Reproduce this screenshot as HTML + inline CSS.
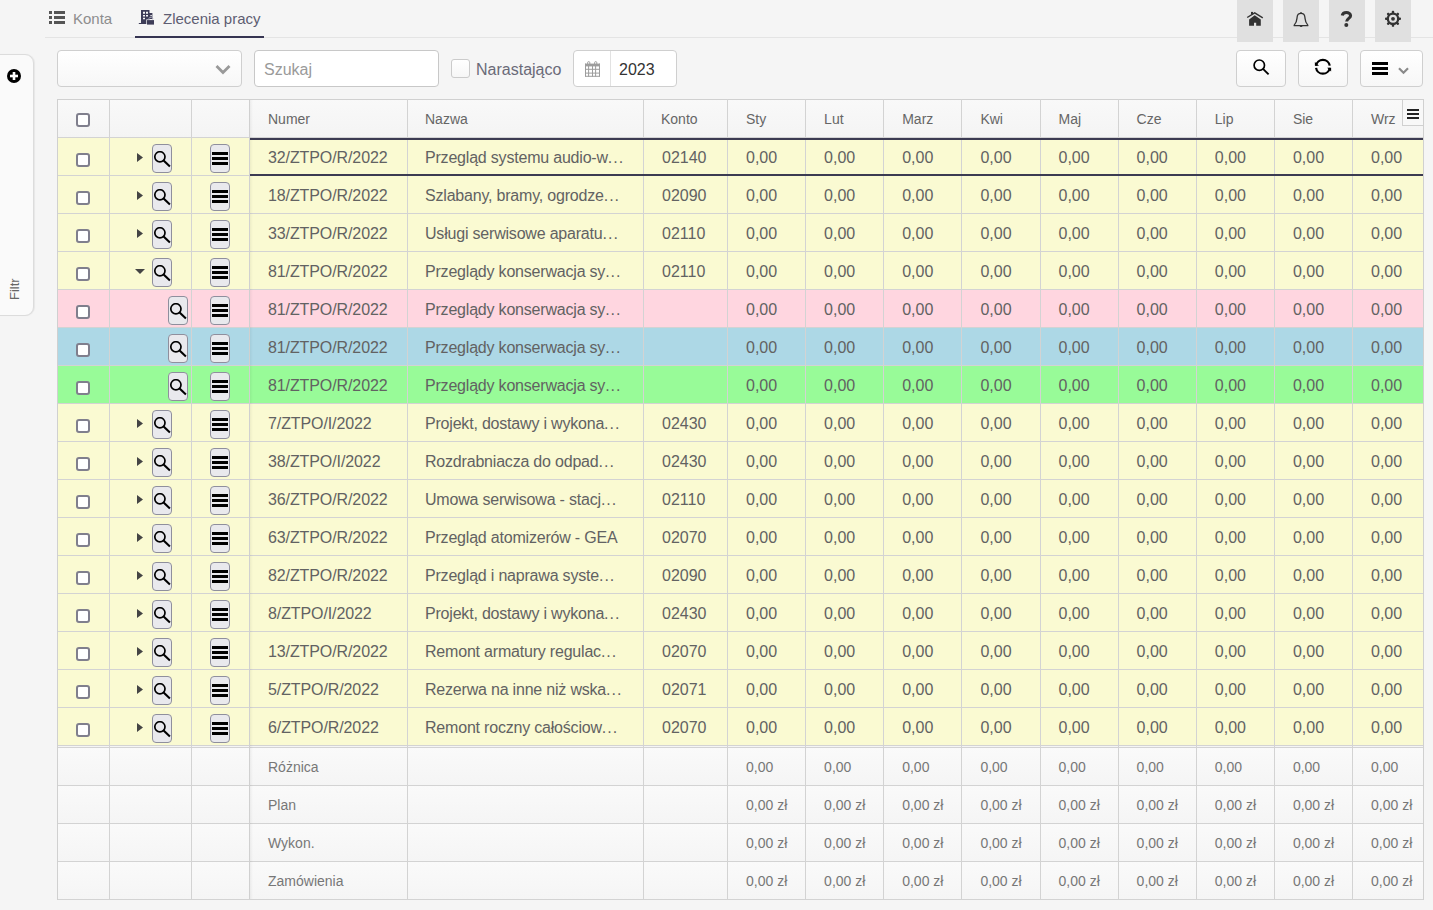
<!DOCTYPE html><html><head><meta charset="utf-8"><style>
*{box-sizing:border-box}
html,body{margin:0;padding:0}
body{width:1433px;height:910px;overflow:hidden;background:#f5f5f5;position:relative;font-family:"Liberation Sans",sans-serif;color:#5c5c5c}
.ab{position:absolute}
.t{position:absolute;white-space:nowrap}
.vl{position:absolute;width:1px;background:#d3d3d3}
.hl{position:absolute;height:1px;background:#d3d3d3}
.cb{position:absolute;width:14px;height:14px;border:2px solid #807f8d;border-radius:3px;background:#fff}
.sb{position:absolute;width:20px;height:29px;border:1px solid #8f8f9d;border-radius:4px;background:#e9e9ed}
.sb svg{position:absolute;left:0px;top:6px}
.mb{position:absolute;width:20px;height:29px;border:1px solid #8f8f9d;border-radius:4px;background:#e9e9ed}
.mb svg{position:absolute;left:1px;top:7px}
.cell{position:absolute;font-size:16px;line-height:18px;white-space:nowrap;color:#626262}
.hc{position:absolute;font-size:14px;line-height:16px;white-space:nowrap;color:#666}
.fc{position:absolute;font-size:14px;line-height:16px;white-space:nowrap;color:#777}
.btn{position:absolute;border:1px solid #cfcfcf;border-radius:4px;background:linear-gradient(#fff,#f7f7f7)}
.tb{position:absolute;top:0;width:36px;height:42px;background:#e0e0e0}
.tb svg{position:absolute}
</style></head><body>

<div class="hl" style="left:45px;top:37px;width:1388px;background:#e4e4e4"></div>
<svg class="ab" style="left:49px;top:11px" width="16" height="13" viewBox="0 0 16 13" fill="#555"><rect x="0" y="0" width="3" height="3"/><rect x="5" y="0" width="11" height="3"/><rect x="0" y="5" width="3" height="3"/><rect x="5" y="5" width="11" height="3"/><rect x="0" y="10" width="3" height="3"/><rect x="5" y="10" width="11" height="3"/></svg>
<div class="t" style="left:73px;top:10px;font-size:15px;line-height:17px;color:#8d8d8d">Konta</div>
<svg class="ab" style="left:138px;top:9px" width="17" height="16" viewBox="0 0 17 16" fill="#3e3d58"><path fill-rule="evenodd" d="M3 1h8.5v14H3z M5 2.8h2v1.9H5z M8 2.8h2v1.9H8z M5 5.9h2v1.7H5z M8 5.9h2v1.7H8z M5 8.8h2v1.4H5z"/><rect x="0.8" y="14" width="3" height="1"/><path fill-rule="evenodd" d="M11 4.1h3.4v6H11z M12.4 5.9h1.4v1.3h-1.4z"/><rect x="9" y="11.1" width="7" height="4.5" stroke="#f5f5f5" stroke-width="1.4" paint-order="stroke"/><path d="M10.9 10.4v-0.9a1 1 0 0 1 1-1h1.8a1 1 0 0 1 1 1v0.9" fill="none" stroke="#9b9aad" stroke-width="1"/></svg>
<div class="t" style="left:163px;top:10px;font-size:15px;line-height:17px;color:#5e5d72">Zlecenia pracy</div>
<div class="ab" style="left:135px;top:36px;width:129px;height:2px;background:#363552"></div>
<div class="tb" style="left:1237px"></div>
<div class="tb" style="left:1283px"></div>
<div class="tb" style="left:1329px"></div>
<div class="tb" style="left:1375px"></div>
<svg class="ab" style="left:1246px;top:11px" width="18" height="16" viewBox="0 0 18 16"><polyline points="1.2,6.5 8.7,1.9 16.8,6.8" fill="none" stroke="#333" stroke-width="1.4"/><rect x="5" y="0.9" width="2" height="2.4" fill="#333"/><path d="M3.1 8.5L8.7 4.3L14.8 8.5V14.8H10.2V11.7H8V14.8H3.1Z" fill="#333"/></svg>
<svg class="ab" style="left:1293px;top:12px" width="16" height="16" viewBox="0 0 16 16"><path d="M8 1.3c-2.3 0-3.7 1.6-3.9 3.9c-0.3 3.2 -0.2 5.2 -2.9 7.9v0.6h13.6v-0.6c-2.7-2.7-2.6-4.7-2.9-7.9C11.7 2.9 10.3 1.3 8 1.3z" fill="none" stroke="#333" stroke-width="1.3" stroke-linejoin="round"/><path d="M6.6 13.6a1.5 1.5 0 0 0 3 0z" fill="#333"/><circle cx="8" cy="0.9" r="0.8" fill="#333"/></svg>
<svg class="ab" style="left:1340px;top:10px" width="13" height="18" viewBox="0 0 13 18"><path d="M2.2 5.6C2.6 3.4 4.2 2.5 6.4 2.5C8.8 2.5 10.6 3.8 10.6 5.7C10.6 8.2 6.6 8.6 6.6 11.6" fill="none" stroke="#333" stroke-width="3"/><circle cx="6.3" cy="15.1" r="2" fill="#333"/></svg>
<svg class="ab" style="left:1384px;top:10px" width="18" height="18" viewBox="0 0 18 18"><g transform="translate(9 8.8)" fill="#333"><rect x="-1.2" y="-8" width="2.4" height="3.2" rx="0.9" transform="rotate(0)"/><rect x="-1.2" y="-8" width="2.4" height="3.2" rx="0.9" transform="rotate(45)"/><rect x="-1.2" y="-8" width="2.4" height="3.2" rx="0.9" transform="rotate(90)"/><rect x="-1.2" y="-8" width="2.4" height="3.2" rx="0.9" transform="rotate(135)"/><rect x="-1.2" y="-8" width="2.4" height="3.2" rx="0.9" transform="rotate(180)"/><rect x="-1.2" y="-8" width="2.4" height="3.2" rx="0.9" transform="rotate(225)"/><rect x="-1.2" y="-8" width="2.4" height="3.2" rx="0.9" transform="rotate(270)"/><rect x="-1.2" y="-8" width="2.4" height="3.2" rx="0.9" transform="rotate(315)"/><circle r="5.2" fill="none" stroke="#333" stroke-width="2.3"/><circle r="1.9"/></g></svg>
<div class="btn" style="left:57px;top:50px;width:185px;height:37px"></div>
<svg class="ab" style="left:215px;top:64px" width="16" height="11" viewBox="0 0 16 11"><path d="M1.5 2l6.5 6.5L14.5 2" fill="none" stroke="#999" stroke-width="2.8"/></svg>
<div class="ab" style="left:254px;top:50px;width:185px;height:37px;border:1px solid #c8c8c8;border-radius:4px;background:#fff"></div>
<div class="t" style="left:264px;top:61px;font-size:16px;line-height:18px;color:#9a9a9a">Szukaj</div>
<div class="ab" style="left:451px;top:59px;width:19px;height:19px;border:1px solid #cbcbcb;border-radius:3px;background:linear-gradient(#fff,#f6f6f6)"></div>
<div class="t" style="left:476px;top:61px;font-size:16px;line-height:18px;color:#6a6a78">Narastająco</div>
<div class="ab" style="left:573px;top:50px;width:104px;height:37px;border:1px solid #cfcfcf;border-radius:4px;background:#fff"></div>
<div class="vl" style="left:610px;top:51px;height:35px;background:#e2e2e2"></div>
<svg class="ab" style="left:585px;top:61px" width="15" height="16" viewBox="0 0 15 16" fill="#9d9d9d"><rect x="0" y="2.6" width="15" height="2.8"/><rect x="0" y="2.6" width="1" height="13"/><rect x="3.1" y="5" width="1" height="10.6"/><rect x="7" y="5" width="1" height="10.6"/><rect x="10.1" y="5" width="1" height="10.6"/><rect x="14" y="2.6" width="1" height="13"/><rect x="0" y="7.8" width="15" height="1"/><rect x="0" y="11.6" width="15" height="1"/><rect x="0" y="14.8" width="15" height="1"/><rect x="2.6" y="0.6" width="2.2" height="4.2" rx="1.1" fill="none" stroke="#9d9d9d" stroke-width="1"/><rect x="9.6" y="0.6" width="2.2" height="4.2" rx="1.1" fill="none" stroke="#9d9d9d" stroke-width="1"/></svg>
<div class="t" style="left:619px;top:61px;font-size:16px;line-height:18px;color:#333">2023</div>
<div class="btn" style="left:1236px;top:50px;width:50px;height:37px"></div>
<svg class="ab" style="left:1252px;top:58px" width="18" height="18" viewBox="0 0 18 18"><circle cx="7.3" cy="7.2" r="5.2" fill="none" stroke="#000" stroke-width="1.7"/><line x1="11" y1="10.9" x2="16.6" y2="16.4" stroke="#000" stroke-width="1.9"/></svg>
<div class="btn" style="left:1298px;top:50px;width:50px;height:37px"></div>
<svg class="ab" style="left:1314px;top:58px" width="18" height="18" viewBox="0 0 18 18"><path d="M2.07 7.7A6.9 6.9 0 0 1 15.73 7.7" fill="none" stroke="#000" stroke-width="2.2"/><path d="M0.9 4.1V7.7H5z" fill="#000"/><path d="M15.73 9.8A6.9 6.9 0 0 1 2.07 9.8" fill="none" stroke="#000" stroke-width="2.2"/><path d="M17.1 13.6V9.8H13.1z" fill="#000"/></svg>
<div class="btn" style="left:1360px;top:50px;width:63px;height:37px"></div>
<svg class="ab" style="left:1372px;top:62px" width="16" height="13" viewBox="0 0 16 13"><rect x="0" y="0" width="16" height="3"/><rect x="0" y="5" width="16" height="3"/><rect x="0" y="10" width="16" height="3"/></svg>
<svg class="ab" style="left:1398px;top:67px" width="11" height="8" viewBox="0 0 11 8"><path d="M1 1.2l4.5 4.5L10 1.2" fill="none" stroke="#8a8a8a" stroke-width="2.2"/></svg>
<div class="ab" style="left:-10px;top:54px;width:44px;height:262px;border:1px solid #dcdcdc;border-radius:0 9px 9px 0;background:#fafafa;box-shadow:1px 0 1px rgba(0,0,0,0.06)"></div>
<svg class="ab" style="left:7px;top:69px" width="14" height="14" viewBox="0 0 14 14"><circle cx="7" cy="7" r="7" fill="#000"/><rect x="3" y="5.7" width="8" height="2.6" fill="#fff"/><rect x="5.7" y="3" width="2.6" height="8" fill="#fff"/></svg>
<div class="t" style="left:5px;top:282px;width:20px;height:16px;font-size:13px;line-height:16px;color:#666;transform:rotate(-90deg);transform-origin:10px 8px">Filtr</div>
<div class="ab" style="left:57px;top:99px;width:1367px;height:39px;background:linear-gradient(#f9f9f9,#f4f4f4)"></div>
<div class="ab" style="left:57px;top:137px;width:1366px;height:38px;background:#fafad2"></div>
<div class="ab" style="left:57px;top:175px;width:1366px;height:38px;background:#fafad2"></div>
<div class="ab" style="left:57px;top:213px;width:1366px;height:38px;background:#fafad2"></div>
<div class="ab" style="left:57px;top:251px;width:1366px;height:38px;background:#fafad2"></div>
<div class="ab" style="left:57px;top:289px;width:1366px;height:38px;background:#ffd6e0"></div>
<div class="ab" style="left:57px;top:327px;width:1366px;height:38px;background:#add8e6"></div>
<div class="ab" style="left:57px;top:365px;width:1366px;height:38px;background:#98fb98"></div>
<div class="ab" style="left:57px;top:403px;width:1366px;height:38px;background:#fafad2"></div>
<div class="ab" style="left:57px;top:441px;width:1366px;height:38px;background:#fafad2"></div>
<div class="ab" style="left:57px;top:479px;width:1366px;height:38px;background:#fafad2"></div>
<div class="ab" style="left:57px;top:517px;width:1366px;height:38px;background:#fafad2"></div>
<div class="ab" style="left:57px;top:555px;width:1366px;height:38px;background:#fafad2"></div>
<div class="ab" style="left:57px;top:593px;width:1366px;height:38px;background:#fafad2"></div>
<div class="ab" style="left:57px;top:631px;width:1366px;height:38px;background:#fafad2"></div>
<div class="ab" style="left:57px;top:669px;width:1366px;height:38px;background:#fafad2"></div>
<div class="ab" style="left:57px;top:707px;width:1366px;height:38px;background:#fafad2"></div>
<div class="ab" style="left:57px;top:747px;width:1366px;height:38px;background:linear-gradient(#fafafa,#f5f5f5)"></div>
<div class="ab" style="left:57px;top:785px;width:1366px;height:38px;background:linear-gradient(#fafafa,#f5f5f5)"></div>
<div class="ab" style="left:57px;top:823px;width:1366px;height:38px;background:linear-gradient(#fafafa,#f5f5f5)"></div>
<div class="ab" style="left:57px;top:861px;width:1366px;height:38px;background:linear-gradient(#fafafa,#f5f5f5)"></div>
<div class="hl" style="left:57px;top:99px;width:1367px;background:#d0d0d0"></div>
<div class="hl" style="left:57px;top:137px;width:1366px"></div>
<div class="hl" style="left:57px;top:175px;width:1366px"></div>
<div class="hl" style="left:57px;top:213px;width:1366px"></div>
<div class="hl" style="left:57px;top:251px;width:1366px"></div>
<div class="hl" style="left:57px;top:289px;width:1366px"></div>
<div class="hl" style="left:57px;top:327px;width:1366px"></div>
<div class="hl" style="left:57px;top:365px;width:1366px"></div>
<div class="hl" style="left:57px;top:403px;width:1366px"></div>
<div class="hl" style="left:57px;top:441px;width:1366px"></div>
<div class="hl" style="left:57px;top:479px;width:1366px"></div>
<div class="hl" style="left:57px;top:517px;width:1366px"></div>
<div class="hl" style="left:57px;top:555px;width:1366px"></div>
<div class="hl" style="left:57px;top:593px;width:1366px"></div>
<div class="hl" style="left:57px;top:631px;width:1366px"></div>
<div class="hl" style="left:57px;top:669px;width:1366px"></div>
<div class="hl" style="left:57px;top:707px;width:1366px"></div>
<div class="hl" style="left:57px;top:745px;width:1366px"></div>
<div class="hl" style="left:57px;top:747px;width:1367px"></div>
<div class="hl" style="left:57px;top:785px;width:1367px"></div>
<div class="hl" style="left:57px;top:823px;width:1367px"></div>
<div class="hl" style="left:57px;top:861px;width:1367px"></div>
<div class="hl" style="left:57px;top:899px;width:1367px"></div>
<div class="vl" style="left:57px;top:99px;height:801px;background:#d0d0d0"></div>
<div class="vl" style="left:109px;top:99px;height:800px"></div>
<div class="vl" style="left:191px;top:99px;height:800px"></div>
<div class="vl" style="left:249px;top:99px;height:800px;background:#d0d0d0"></div>
<div class="ab" style="left:250px;top:100px;width:3px;height:799px;background:linear-gradient(90deg,rgba(0,0,0,0.05),rgba(0,0,0,0))"></div>
<div class="vl" style="left:407px;top:99px;height:800px"></div>
<div class="vl" style="left:643px;top:99px;height:800px"></div>
<div class="vl" style="left:727px;top:99px;height:800px"></div>
<div class="vl" style="left:805px;top:99px;height:800px"></div>
<div class="vl" style="left:883px;top:99px;height:800px"></div>
<div class="vl" style="left:961px;top:99px;height:800px"></div>
<div class="vl" style="left:1040px;top:99px;height:800px"></div>
<div class="vl" style="left:1118px;top:99px;height:800px"></div>
<div class="vl" style="left:1196px;top:99px;height:800px"></div>
<div class="vl" style="left:1274px;top:99px;height:800px"></div>
<div class="vl" style="left:1352px;top:99px;height:800px"></div>
<div class="vl" style="left:1423px;top:99px;height:801px;background:#d0d0d0"></div>
<div class="ab" style="left:250px;top:138px;width:1173px;height:2px;background:#3c3b52"></div>
<div class="ab" style="left:250px;top:174px;width:1173px;height:2px;background:#3c3b52"></div>
<div class="ab" style="left:1402px;top:99px;width:22px;height:27px;border:1px solid #d0d0d0;background:#f8f8f8"></div>
<svg class="ab" style="left:1407px;top:109px" width="12" height="10" viewBox="0 0 12 10" fill="#222"><rect x="0" y="0" width="12" height="2"/><rect x="0" y="4" width="12" height="2"/><rect x="0" y="8" width="12" height="2"/></svg>
<div class="cb" style="left:76px;top:113px"></div>
<div class="hc" style="left:268.0px;top:111px">Numer</div>
<div class="hc" style="left:425.0px;top:111px">Nazwa</div>
<div class="hc" style="left:661.0px;top:111px">Konto</div>
<div class="hc" style="left:746.0px;top:111px">Sty</div>
<div class="hc" style="left:824.1px;top:111px">Lut</div>
<div class="hc" style="left:902.2px;top:111px">Marz</div>
<div class="hc" style="left:980.4px;top:111px">Kwi</div>
<div class="hc" style="left:1058.5px;top:111px">Maj</div>
<div class="hc" style="left:1136.6px;top:111px">Cze</div>
<div class="hc" style="left:1214.8px;top:111px">Lip</div>
<div class="hc" style="left:1292.9px;top:111px">Sie</div>
<div class="hc" style="left:1371.0px;top:111px">Wrz</div>
<div class="cb" style="left:76px;top:153px"></div>
<svg class="ab" style="left:137px;top:153px" width="6" height="9" viewBox="0 0 6 9"><path d="M0 0l6 4.5L0 9z" fill="#444"/></svg>
<div class="sb" style="left:152px;top:144px"><svg width="19" height="24" viewBox="0 0 19 24"><circle cx="6.9" cy="5.85" r="5.1" fill="none" stroke="#000" stroke-width="1.7"/><line x1="10.6" y1="9.6" x2="16.9" y2="15.6" stroke="#000" stroke-width="2.1"/></svg></div>
<div class="mb" style="left:210px;top:144px"><svg width="16" height="13" viewBox="0 0 16 13"><rect x="0" y="0" width="16" height="3"/><rect x="0" y="5" width="16" height="3"/><rect x="0" y="10" width="16" height="3"/></svg></div>
<div class="cell" style="letter-spacing:-0.1px;left:268.0px;top:149px">32/ZTPO/R/2022</div>
<div class="cell" style="letter-spacing:-0.2px;left:425.0px;top:149px">Przegląd systemu audio-w<span style="letter-spacing:1px">...</span></div>
<div class="cell" style="left:662.0px;top:149px">02140</div>
<div class="cell" style="left:746.0px;top:149px">0,00</div>
<div class="cell" style="left:824.1px;top:149px">0,00</div>
<div class="cell" style="left:902.2px;top:149px">0,00</div>
<div class="cell" style="left:980.4px;top:149px">0,00</div>
<div class="cell" style="left:1058.5px;top:149px">0,00</div>
<div class="cell" style="left:1136.6px;top:149px">0,00</div>
<div class="cell" style="left:1214.8px;top:149px">0,00</div>
<div class="cell" style="left:1292.9px;top:149px">0,00</div>
<div class="cell" style="left:1371.0px;top:149px">0,00</div>
<div class="cb" style="left:76px;top:191px"></div>
<svg class="ab" style="left:137px;top:191px" width="6" height="9" viewBox="0 0 6 9"><path d="M0 0l6 4.5L0 9z" fill="#444"/></svg>
<div class="sb" style="left:152px;top:182px"><svg width="19" height="24" viewBox="0 0 19 24"><circle cx="6.9" cy="5.85" r="5.1" fill="none" stroke="#000" stroke-width="1.7"/><line x1="10.6" y1="9.6" x2="16.9" y2="15.6" stroke="#000" stroke-width="2.1"/></svg></div>
<div class="mb" style="left:210px;top:182px"><svg width="16" height="13" viewBox="0 0 16 13"><rect x="0" y="0" width="16" height="3"/><rect x="0" y="5" width="16" height="3"/><rect x="0" y="10" width="16" height="3"/></svg></div>
<div class="cell" style="letter-spacing:-0.1px;left:268.0px;top:187px">18/ZTPO/R/2022</div>
<div class="cell" style="letter-spacing:-0.2px;left:425.0px;top:187px">Szlabany, bramy, ogrodze<span style="letter-spacing:1px">...</span></div>
<div class="cell" style="left:662.0px;top:187px">02090</div>
<div class="cell" style="left:746.0px;top:187px">0,00</div>
<div class="cell" style="left:824.1px;top:187px">0,00</div>
<div class="cell" style="left:902.2px;top:187px">0,00</div>
<div class="cell" style="left:980.4px;top:187px">0,00</div>
<div class="cell" style="left:1058.5px;top:187px">0,00</div>
<div class="cell" style="left:1136.6px;top:187px">0,00</div>
<div class="cell" style="left:1214.8px;top:187px">0,00</div>
<div class="cell" style="left:1292.9px;top:187px">0,00</div>
<div class="cell" style="left:1371.0px;top:187px">0,00</div>
<div class="cb" style="left:76px;top:229px"></div>
<svg class="ab" style="left:137px;top:229px" width="6" height="9" viewBox="0 0 6 9"><path d="M0 0l6 4.5L0 9z" fill="#444"/></svg>
<div class="sb" style="left:152px;top:220px"><svg width="19" height="24" viewBox="0 0 19 24"><circle cx="6.9" cy="5.85" r="5.1" fill="none" stroke="#000" stroke-width="1.7"/><line x1="10.6" y1="9.6" x2="16.9" y2="15.6" stroke="#000" stroke-width="2.1"/></svg></div>
<div class="mb" style="left:210px;top:220px"><svg width="16" height="13" viewBox="0 0 16 13"><rect x="0" y="0" width="16" height="3"/><rect x="0" y="5" width="16" height="3"/><rect x="0" y="10" width="16" height="3"/></svg></div>
<div class="cell" style="letter-spacing:-0.1px;left:268.0px;top:225px">33/ZTPO/R/2022</div>
<div class="cell" style="letter-spacing:-0.2px;left:425.0px;top:225px">Usługi serwisowe aparatu<span style="letter-spacing:1px">...</span></div>
<div class="cell" style="left:662.0px;top:225px">02110</div>
<div class="cell" style="left:746.0px;top:225px">0,00</div>
<div class="cell" style="left:824.1px;top:225px">0,00</div>
<div class="cell" style="left:902.2px;top:225px">0,00</div>
<div class="cell" style="left:980.4px;top:225px">0,00</div>
<div class="cell" style="left:1058.5px;top:225px">0,00</div>
<div class="cell" style="left:1136.6px;top:225px">0,00</div>
<div class="cell" style="left:1214.8px;top:225px">0,00</div>
<div class="cell" style="left:1292.9px;top:225px">0,00</div>
<div class="cell" style="left:1371.0px;top:225px">0,00</div>
<div class="cb" style="left:76px;top:267px"></div>
<svg class="ab" style="left:135px;top:269px" width="10" height="5" viewBox="0 0 10 5"><path d="M0 0h10L5 5z" fill="#444"/></svg>
<div class="sb" style="left:152px;top:258px"><svg width="19" height="24" viewBox="0 0 19 24"><circle cx="6.9" cy="5.85" r="5.1" fill="none" stroke="#000" stroke-width="1.7"/><line x1="10.6" y1="9.6" x2="16.9" y2="15.6" stroke="#000" stroke-width="2.1"/></svg></div>
<div class="mb" style="left:210px;top:258px"><svg width="16" height="13" viewBox="0 0 16 13"><rect x="0" y="0" width="16" height="3"/><rect x="0" y="5" width="16" height="3"/><rect x="0" y="10" width="16" height="3"/></svg></div>
<div class="cell" style="letter-spacing:-0.1px;left:268.0px;top:263px">81/ZTPO/R/2022</div>
<div class="cell" style="letter-spacing:-0.2px;left:425.0px;top:263px">Przeglądy konserwacja sy<span style="letter-spacing:1px">...</span></div>
<div class="cell" style="left:662.0px;top:263px">02110</div>
<div class="cell" style="left:746.0px;top:263px">0,00</div>
<div class="cell" style="left:824.1px;top:263px">0,00</div>
<div class="cell" style="left:902.2px;top:263px">0,00</div>
<div class="cell" style="left:980.4px;top:263px">0,00</div>
<div class="cell" style="left:1058.5px;top:263px">0,00</div>
<div class="cell" style="left:1136.6px;top:263px">0,00</div>
<div class="cell" style="left:1214.8px;top:263px">0,00</div>
<div class="cell" style="left:1292.9px;top:263px">0,00</div>
<div class="cell" style="left:1371.0px;top:263px">0,00</div>
<div class="cb" style="left:76px;top:305px"></div>
<div class="sb" style="left:168px;top:296px"><svg width="19" height="24" viewBox="0 0 19 24"><circle cx="6.9" cy="5.85" r="5.1" fill="none" stroke="#000" stroke-width="1.7"/><line x1="10.6" y1="9.6" x2="16.9" y2="15.6" stroke="#000" stroke-width="2.1"/></svg></div>
<div class="mb" style="left:210px;top:296px"><svg width="16" height="13" viewBox="0 0 16 13"><rect x="0" y="0" width="16" height="3"/><rect x="0" y="5" width="16" height="3"/><rect x="0" y="10" width="16" height="3"/></svg></div>
<div class="cell" style="letter-spacing:-0.1px;left:268.0px;top:301px">81/ZTPO/R/2022</div>
<div class="cell" style="letter-spacing:-0.2px;left:425.0px;top:301px">Przeglądy konserwacja sy<span style="letter-spacing:1px">...</span></div>
<div class="cell" style="left:746.0px;top:301px">0,00</div>
<div class="cell" style="left:824.1px;top:301px">0,00</div>
<div class="cell" style="left:902.2px;top:301px">0,00</div>
<div class="cell" style="left:980.4px;top:301px">0,00</div>
<div class="cell" style="left:1058.5px;top:301px">0,00</div>
<div class="cell" style="left:1136.6px;top:301px">0,00</div>
<div class="cell" style="left:1214.8px;top:301px">0,00</div>
<div class="cell" style="left:1292.9px;top:301px">0,00</div>
<div class="cell" style="left:1371.0px;top:301px">0,00</div>
<div class="cb" style="left:76px;top:343px"></div>
<div class="sb" style="left:168px;top:334px"><svg width="19" height="24" viewBox="0 0 19 24"><circle cx="6.9" cy="5.85" r="5.1" fill="none" stroke="#000" stroke-width="1.7"/><line x1="10.6" y1="9.6" x2="16.9" y2="15.6" stroke="#000" stroke-width="2.1"/></svg></div>
<div class="mb" style="left:210px;top:334px"><svg width="16" height="13" viewBox="0 0 16 13"><rect x="0" y="0" width="16" height="3"/><rect x="0" y="5" width="16" height="3"/><rect x="0" y="10" width="16" height="3"/></svg></div>
<div class="cell" style="letter-spacing:-0.1px;left:268.0px;top:339px">81/ZTPO/R/2022</div>
<div class="cell" style="letter-spacing:-0.2px;left:425.0px;top:339px">Przeglądy konserwacja sy<span style="letter-spacing:1px">...</span></div>
<div class="cell" style="left:746.0px;top:339px">0,00</div>
<div class="cell" style="left:824.1px;top:339px">0,00</div>
<div class="cell" style="left:902.2px;top:339px">0,00</div>
<div class="cell" style="left:980.4px;top:339px">0,00</div>
<div class="cell" style="left:1058.5px;top:339px">0,00</div>
<div class="cell" style="left:1136.6px;top:339px">0,00</div>
<div class="cell" style="left:1214.8px;top:339px">0,00</div>
<div class="cell" style="left:1292.9px;top:339px">0,00</div>
<div class="cell" style="left:1371.0px;top:339px">0,00</div>
<div class="cb" style="left:76px;top:381px"></div>
<div class="sb" style="left:168px;top:372px"><svg width="19" height="24" viewBox="0 0 19 24"><circle cx="6.9" cy="5.85" r="5.1" fill="none" stroke="#000" stroke-width="1.7"/><line x1="10.6" y1="9.6" x2="16.9" y2="15.6" stroke="#000" stroke-width="2.1"/></svg></div>
<div class="mb" style="left:210px;top:372px"><svg width="16" height="13" viewBox="0 0 16 13"><rect x="0" y="0" width="16" height="3"/><rect x="0" y="5" width="16" height="3"/><rect x="0" y="10" width="16" height="3"/></svg></div>
<div class="cell" style="letter-spacing:-0.1px;left:268.0px;top:377px">81/ZTPO/R/2022</div>
<div class="cell" style="letter-spacing:-0.2px;left:425.0px;top:377px">Przeglądy konserwacja sy<span style="letter-spacing:1px">...</span></div>
<div class="cell" style="left:746.0px;top:377px">0,00</div>
<div class="cell" style="left:824.1px;top:377px">0,00</div>
<div class="cell" style="left:902.2px;top:377px">0,00</div>
<div class="cell" style="left:980.4px;top:377px">0,00</div>
<div class="cell" style="left:1058.5px;top:377px">0,00</div>
<div class="cell" style="left:1136.6px;top:377px">0,00</div>
<div class="cell" style="left:1214.8px;top:377px">0,00</div>
<div class="cell" style="left:1292.9px;top:377px">0,00</div>
<div class="cell" style="left:1371.0px;top:377px">0,00</div>
<div class="cb" style="left:76px;top:419px"></div>
<svg class="ab" style="left:137px;top:419px" width="6" height="9" viewBox="0 0 6 9"><path d="M0 0l6 4.5L0 9z" fill="#444"/></svg>
<div class="sb" style="left:152px;top:410px"><svg width="19" height="24" viewBox="0 0 19 24"><circle cx="6.9" cy="5.85" r="5.1" fill="none" stroke="#000" stroke-width="1.7"/><line x1="10.6" y1="9.6" x2="16.9" y2="15.6" stroke="#000" stroke-width="2.1"/></svg></div>
<div class="mb" style="left:210px;top:410px"><svg width="16" height="13" viewBox="0 0 16 13"><rect x="0" y="0" width="16" height="3"/><rect x="0" y="5" width="16" height="3"/><rect x="0" y="10" width="16" height="3"/></svg></div>
<div class="cell" style="letter-spacing:-0.1px;left:268.0px;top:415px">7/ZTPO/I/2022</div>
<div class="cell" style="letter-spacing:-0.2px;left:425.0px;top:415px">Projekt, dostawy i wykona<span style="letter-spacing:1px">...</span></div>
<div class="cell" style="left:662.0px;top:415px">02430</div>
<div class="cell" style="left:746.0px;top:415px">0,00</div>
<div class="cell" style="left:824.1px;top:415px">0,00</div>
<div class="cell" style="left:902.2px;top:415px">0,00</div>
<div class="cell" style="left:980.4px;top:415px">0,00</div>
<div class="cell" style="left:1058.5px;top:415px">0,00</div>
<div class="cell" style="left:1136.6px;top:415px">0,00</div>
<div class="cell" style="left:1214.8px;top:415px">0,00</div>
<div class="cell" style="left:1292.9px;top:415px">0,00</div>
<div class="cell" style="left:1371.0px;top:415px">0,00</div>
<div class="cb" style="left:76px;top:457px"></div>
<svg class="ab" style="left:137px;top:457px" width="6" height="9" viewBox="0 0 6 9"><path d="M0 0l6 4.5L0 9z" fill="#444"/></svg>
<div class="sb" style="left:152px;top:448px"><svg width="19" height="24" viewBox="0 0 19 24"><circle cx="6.9" cy="5.85" r="5.1" fill="none" stroke="#000" stroke-width="1.7"/><line x1="10.6" y1="9.6" x2="16.9" y2="15.6" stroke="#000" stroke-width="2.1"/></svg></div>
<div class="mb" style="left:210px;top:448px"><svg width="16" height="13" viewBox="0 0 16 13"><rect x="0" y="0" width="16" height="3"/><rect x="0" y="5" width="16" height="3"/><rect x="0" y="10" width="16" height="3"/></svg></div>
<div class="cell" style="letter-spacing:-0.1px;left:268.0px;top:453px">38/ZTPO/I/2022</div>
<div class="cell" style="letter-spacing:-0.2px;left:425.0px;top:453px">Rozdrabniacza do odpad<span style="letter-spacing:1px">...</span></div>
<div class="cell" style="left:662.0px;top:453px">02430</div>
<div class="cell" style="left:746.0px;top:453px">0,00</div>
<div class="cell" style="left:824.1px;top:453px">0,00</div>
<div class="cell" style="left:902.2px;top:453px">0,00</div>
<div class="cell" style="left:980.4px;top:453px">0,00</div>
<div class="cell" style="left:1058.5px;top:453px">0,00</div>
<div class="cell" style="left:1136.6px;top:453px">0,00</div>
<div class="cell" style="left:1214.8px;top:453px">0,00</div>
<div class="cell" style="left:1292.9px;top:453px">0,00</div>
<div class="cell" style="left:1371.0px;top:453px">0,00</div>
<div class="cb" style="left:76px;top:495px"></div>
<svg class="ab" style="left:137px;top:495px" width="6" height="9" viewBox="0 0 6 9"><path d="M0 0l6 4.5L0 9z" fill="#444"/></svg>
<div class="sb" style="left:152px;top:486px"><svg width="19" height="24" viewBox="0 0 19 24"><circle cx="6.9" cy="5.85" r="5.1" fill="none" stroke="#000" stroke-width="1.7"/><line x1="10.6" y1="9.6" x2="16.9" y2="15.6" stroke="#000" stroke-width="2.1"/></svg></div>
<div class="mb" style="left:210px;top:486px"><svg width="16" height="13" viewBox="0 0 16 13"><rect x="0" y="0" width="16" height="3"/><rect x="0" y="5" width="16" height="3"/><rect x="0" y="10" width="16" height="3"/></svg></div>
<div class="cell" style="letter-spacing:-0.1px;left:268.0px;top:491px">36/ZTPO/R/2022</div>
<div class="cell" style="letter-spacing:-0.2px;left:425.0px;top:491px">Umowa serwisowa - stacj<span style="letter-spacing:1px">...</span></div>
<div class="cell" style="left:662.0px;top:491px">02110</div>
<div class="cell" style="left:746.0px;top:491px">0,00</div>
<div class="cell" style="left:824.1px;top:491px">0,00</div>
<div class="cell" style="left:902.2px;top:491px">0,00</div>
<div class="cell" style="left:980.4px;top:491px">0,00</div>
<div class="cell" style="left:1058.5px;top:491px">0,00</div>
<div class="cell" style="left:1136.6px;top:491px">0,00</div>
<div class="cell" style="left:1214.8px;top:491px">0,00</div>
<div class="cell" style="left:1292.9px;top:491px">0,00</div>
<div class="cell" style="left:1371.0px;top:491px">0,00</div>
<div class="cb" style="left:76px;top:533px"></div>
<svg class="ab" style="left:137px;top:533px" width="6" height="9" viewBox="0 0 6 9"><path d="M0 0l6 4.5L0 9z" fill="#444"/></svg>
<div class="sb" style="left:152px;top:524px"><svg width="19" height="24" viewBox="0 0 19 24"><circle cx="6.9" cy="5.85" r="5.1" fill="none" stroke="#000" stroke-width="1.7"/><line x1="10.6" y1="9.6" x2="16.9" y2="15.6" stroke="#000" stroke-width="2.1"/></svg></div>
<div class="mb" style="left:210px;top:524px"><svg width="16" height="13" viewBox="0 0 16 13"><rect x="0" y="0" width="16" height="3"/><rect x="0" y="5" width="16" height="3"/><rect x="0" y="10" width="16" height="3"/></svg></div>
<div class="cell" style="letter-spacing:-0.1px;left:268.0px;top:529px">63/ZTPO/R/2022</div>
<div class="cell" style="letter-spacing:-0.2px;left:425.0px;top:529px">Przegląd atomizerów - GEA</div>
<div class="cell" style="left:662.0px;top:529px">02070</div>
<div class="cell" style="left:746.0px;top:529px">0,00</div>
<div class="cell" style="left:824.1px;top:529px">0,00</div>
<div class="cell" style="left:902.2px;top:529px">0,00</div>
<div class="cell" style="left:980.4px;top:529px">0,00</div>
<div class="cell" style="left:1058.5px;top:529px">0,00</div>
<div class="cell" style="left:1136.6px;top:529px">0,00</div>
<div class="cell" style="left:1214.8px;top:529px">0,00</div>
<div class="cell" style="left:1292.9px;top:529px">0,00</div>
<div class="cell" style="left:1371.0px;top:529px">0,00</div>
<div class="cb" style="left:76px;top:571px"></div>
<svg class="ab" style="left:137px;top:571px" width="6" height="9" viewBox="0 0 6 9"><path d="M0 0l6 4.5L0 9z" fill="#444"/></svg>
<div class="sb" style="left:152px;top:562px"><svg width="19" height="24" viewBox="0 0 19 24"><circle cx="6.9" cy="5.85" r="5.1" fill="none" stroke="#000" stroke-width="1.7"/><line x1="10.6" y1="9.6" x2="16.9" y2="15.6" stroke="#000" stroke-width="2.1"/></svg></div>
<div class="mb" style="left:210px;top:562px"><svg width="16" height="13" viewBox="0 0 16 13"><rect x="0" y="0" width="16" height="3"/><rect x="0" y="5" width="16" height="3"/><rect x="0" y="10" width="16" height="3"/></svg></div>
<div class="cell" style="letter-spacing:-0.1px;left:268.0px;top:567px">82/ZTPO/R/2022</div>
<div class="cell" style="letter-spacing:-0.2px;left:425.0px;top:567px">Przegląd i naprawa syste<span style="letter-spacing:1px">...</span></div>
<div class="cell" style="left:662.0px;top:567px">02090</div>
<div class="cell" style="left:746.0px;top:567px">0,00</div>
<div class="cell" style="left:824.1px;top:567px">0,00</div>
<div class="cell" style="left:902.2px;top:567px">0,00</div>
<div class="cell" style="left:980.4px;top:567px">0,00</div>
<div class="cell" style="left:1058.5px;top:567px">0,00</div>
<div class="cell" style="left:1136.6px;top:567px">0,00</div>
<div class="cell" style="left:1214.8px;top:567px">0,00</div>
<div class="cell" style="left:1292.9px;top:567px">0,00</div>
<div class="cell" style="left:1371.0px;top:567px">0,00</div>
<div class="cb" style="left:76px;top:609px"></div>
<svg class="ab" style="left:137px;top:609px" width="6" height="9" viewBox="0 0 6 9"><path d="M0 0l6 4.5L0 9z" fill="#444"/></svg>
<div class="sb" style="left:152px;top:600px"><svg width="19" height="24" viewBox="0 0 19 24"><circle cx="6.9" cy="5.85" r="5.1" fill="none" stroke="#000" stroke-width="1.7"/><line x1="10.6" y1="9.6" x2="16.9" y2="15.6" stroke="#000" stroke-width="2.1"/></svg></div>
<div class="mb" style="left:210px;top:600px"><svg width="16" height="13" viewBox="0 0 16 13"><rect x="0" y="0" width="16" height="3"/><rect x="0" y="5" width="16" height="3"/><rect x="0" y="10" width="16" height="3"/></svg></div>
<div class="cell" style="letter-spacing:-0.1px;left:268.0px;top:605px">8/ZTPO/I/2022</div>
<div class="cell" style="letter-spacing:-0.2px;left:425.0px;top:605px">Projekt, dostawy i wykona<span style="letter-spacing:1px">...</span></div>
<div class="cell" style="left:662.0px;top:605px">02430</div>
<div class="cell" style="left:746.0px;top:605px">0,00</div>
<div class="cell" style="left:824.1px;top:605px">0,00</div>
<div class="cell" style="left:902.2px;top:605px">0,00</div>
<div class="cell" style="left:980.4px;top:605px">0,00</div>
<div class="cell" style="left:1058.5px;top:605px">0,00</div>
<div class="cell" style="left:1136.6px;top:605px">0,00</div>
<div class="cell" style="left:1214.8px;top:605px">0,00</div>
<div class="cell" style="left:1292.9px;top:605px">0,00</div>
<div class="cell" style="left:1371.0px;top:605px">0,00</div>
<div class="cb" style="left:76px;top:647px"></div>
<svg class="ab" style="left:137px;top:647px" width="6" height="9" viewBox="0 0 6 9"><path d="M0 0l6 4.5L0 9z" fill="#444"/></svg>
<div class="sb" style="left:152px;top:638px"><svg width="19" height="24" viewBox="0 0 19 24"><circle cx="6.9" cy="5.85" r="5.1" fill="none" stroke="#000" stroke-width="1.7"/><line x1="10.6" y1="9.6" x2="16.9" y2="15.6" stroke="#000" stroke-width="2.1"/></svg></div>
<div class="mb" style="left:210px;top:638px"><svg width="16" height="13" viewBox="0 0 16 13"><rect x="0" y="0" width="16" height="3"/><rect x="0" y="5" width="16" height="3"/><rect x="0" y="10" width="16" height="3"/></svg></div>
<div class="cell" style="letter-spacing:-0.1px;left:268.0px;top:643px">13/ZTPO/R/2022</div>
<div class="cell" style="letter-spacing:-0.2px;left:425.0px;top:643px">Remont armatury regulac<span style="letter-spacing:1px">...</span></div>
<div class="cell" style="left:662.0px;top:643px">02070</div>
<div class="cell" style="left:746.0px;top:643px">0,00</div>
<div class="cell" style="left:824.1px;top:643px">0,00</div>
<div class="cell" style="left:902.2px;top:643px">0,00</div>
<div class="cell" style="left:980.4px;top:643px">0,00</div>
<div class="cell" style="left:1058.5px;top:643px">0,00</div>
<div class="cell" style="left:1136.6px;top:643px">0,00</div>
<div class="cell" style="left:1214.8px;top:643px">0,00</div>
<div class="cell" style="left:1292.9px;top:643px">0,00</div>
<div class="cell" style="left:1371.0px;top:643px">0,00</div>
<div class="cb" style="left:76px;top:685px"></div>
<svg class="ab" style="left:137px;top:685px" width="6" height="9" viewBox="0 0 6 9"><path d="M0 0l6 4.5L0 9z" fill="#444"/></svg>
<div class="sb" style="left:152px;top:676px"><svg width="19" height="24" viewBox="0 0 19 24"><circle cx="6.9" cy="5.85" r="5.1" fill="none" stroke="#000" stroke-width="1.7"/><line x1="10.6" y1="9.6" x2="16.9" y2="15.6" stroke="#000" stroke-width="2.1"/></svg></div>
<div class="mb" style="left:210px;top:676px"><svg width="16" height="13" viewBox="0 0 16 13"><rect x="0" y="0" width="16" height="3"/><rect x="0" y="5" width="16" height="3"/><rect x="0" y="10" width="16" height="3"/></svg></div>
<div class="cell" style="letter-spacing:-0.1px;left:268.0px;top:681px">5/ZTPO/R/2022</div>
<div class="cell" style="letter-spacing:-0.2px;left:425.0px;top:681px">Rezerwa na inne niż wska<span style="letter-spacing:1px">...</span></div>
<div class="cell" style="left:662.0px;top:681px">02071</div>
<div class="cell" style="left:746.0px;top:681px">0,00</div>
<div class="cell" style="left:824.1px;top:681px">0,00</div>
<div class="cell" style="left:902.2px;top:681px">0,00</div>
<div class="cell" style="left:980.4px;top:681px">0,00</div>
<div class="cell" style="left:1058.5px;top:681px">0,00</div>
<div class="cell" style="left:1136.6px;top:681px">0,00</div>
<div class="cell" style="left:1214.8px;top:681px">0,00</div>
<div class="cell" style="left:1292.9px;top:681px">0,00</div>
<div class="cell" style="left:1371.0px;top:681px">0,00</div>
<div class="cb" style="left:76px;top:723px"></div>
<svg class="ab" style="left:137px;top:723px" width="6" height="9" viewBox="0 0 6 9"><path d="M0 0l6 4.5L0 9z" fill="#444"/></svg>
<div class="sb" style="left:152px;top:714px"><svg width="19" height="24" viewBox="0 0 19 24"><circle cx="6.9" cy="5.85" r="5.1" fill="none" stroke="#000" stroke-width="1.7"/><line x1="10.6" y1="9.6" x2="16.9" y2="15.6" stroke="#000" stroke-width="2.1"/></svg></div>
<div class="mb" style="left:210px;top:714px"><svg width="16" height="13" viewBox="0 0 16 13"><rect x="0" y="0" width="16" height="3"/><rect x="0" y="5" width="16" height="3"/><rect x="0" y="10" width="16" height="3"/></svg></div>
<div class="cell" style="letter-spacing:-0.1px;left:268.0px;top:719px">6/ZTPO/R/2022</div>
<div class="cell" style="letter-spacing:-0.2px;left:425.0px;top:719px">Remont roczny całościow<span style="letter-spacing:1px">...</span></div>
<div class="cell" style="left:662.0px;top:719px">02070</div>
<div class="cell" style="left:746.0px;top:719px">0,00</div>
<div class="cell" style="left:824.1px;top:719px">0,00</div>
<div class="cell" style="left:902.2px;top:719px">0,00</div>
<div class="cell" style="left:980.4px;top:719px">0,00</div>
<div class="cell" style="left:1058.5px;top:719px">0,00</div>
<div class="cell" style="left:1136.6px;top:719px">0,00</div>
<div class="cell" style="left:1214.8px;top:719px">0,00</div>
<div class="cell" style="left:1292.9px;top:719px">0,00</div>
<div class="cell" style="left:1371.0px;top:719px">0,00</div>
<div class="fc" style="left:268px;top:759px">Różnica</div>
<div class="fc" style="left:746.0px;top:759px">0,00</div>
<div class="fc" style="left:824.1px;top:759px">0,00</div>
<div class="fc" style="left:902.2px;top:759px">0,00</div>
<div class="fc" style="left:980.4px;top:759px">0,00</div>
<div class="fc" style="left:1058.5px;top:759px">0,00</div>
<div class="fc" style="left:1136.6px;top:759px">0,00</div>
<div class="fc" style="left:1214.8px;top:759px">0,00</div>
<div class="fc" style="left:1292.9px;top:759px">0,00</div>
<div class="fc" style="left:1371.0px;top:759px">0,00</div>
<div class="fc" style="left:268px;top:797px">Plan</div>
<div class="fc" style="left:746.0px;top:797px">0,00 zł</div>
<div class="fc" style="left:824.1px;top:797px">0,00 zł</div>
<div class="fc" style="left:902.2px;top:797px">0,00 zł</div>
<div class="fc" style="left:980.4px;top:797px">0,00 zł</div>
<div class="fc" style="left:1058.5px;top:797px">0,00 zł</div>
<div class="fc" style="left:1136.6px;top:797px">0,00 zł</div>
<div class="fc" style="left:1214.8px;top:797px">0,00 zł</div>
<div class="fc" style="left:1292.9px;top:797px">0,00 zł</div>
<div class="fc" style="left:1371.0px;top:797px">0,00 zł</div>
<div class="fc" style="left:268px;top:835px">Wykon.</div>
<div class="fc" style="left:746.0px;top:835px">0,00 zł</div>
<div class="fc" style="left:824.1px;top:835px">0,00 zł</div>
<div class="fc" style="left:902.2px;top:835px">0,00 zł</div>
<div class="fc" style="left:980.4px;top:835px">0,00 zł</div>
<div class="fc" style="left:1058.5px;top:835px">0,00 zł</div>
<div class="fc" style="left:1136.6px;top:835px">0,00 zł</div>
<div class="fc" style="left:1214.8px;top:835px">0,00 zł</div>
<div class="fc" style="left:1292.9px;top:835px">0,00 zł</div>
<div class="fc" style="left:1371.0px;top:835px">0,00 zł</div>
<div class="fc" style="left:268px;top:873px">Zamówienia</div>
<div class="fc" style="left:746.0px;top:873px">0,00 zł</div>
<div class="fc" style="left:824.1px;top:873px">0,00 zł</div>
<div class="fc" style="left:902.2px;top:873px">0,00 zł</div>
<div class="fc" style="left:980.4px;top:873px">0,00 zł</div>
<div class="fc" style="left:1058.5px;top:873px">0,00 zł</div>
<div class="fc" style="left:1136.6px;top:873px">0,00 zł</div>
<div class="fc" style="left:1214.8px;top:873px">0,00 zł</div>
<div class="fc" style="left:1292.9px;top:873px">0,00 zł</div>
<div class="fc" style="left:1371.0px;top:873px">0,00 zł</div>
</body></html>
